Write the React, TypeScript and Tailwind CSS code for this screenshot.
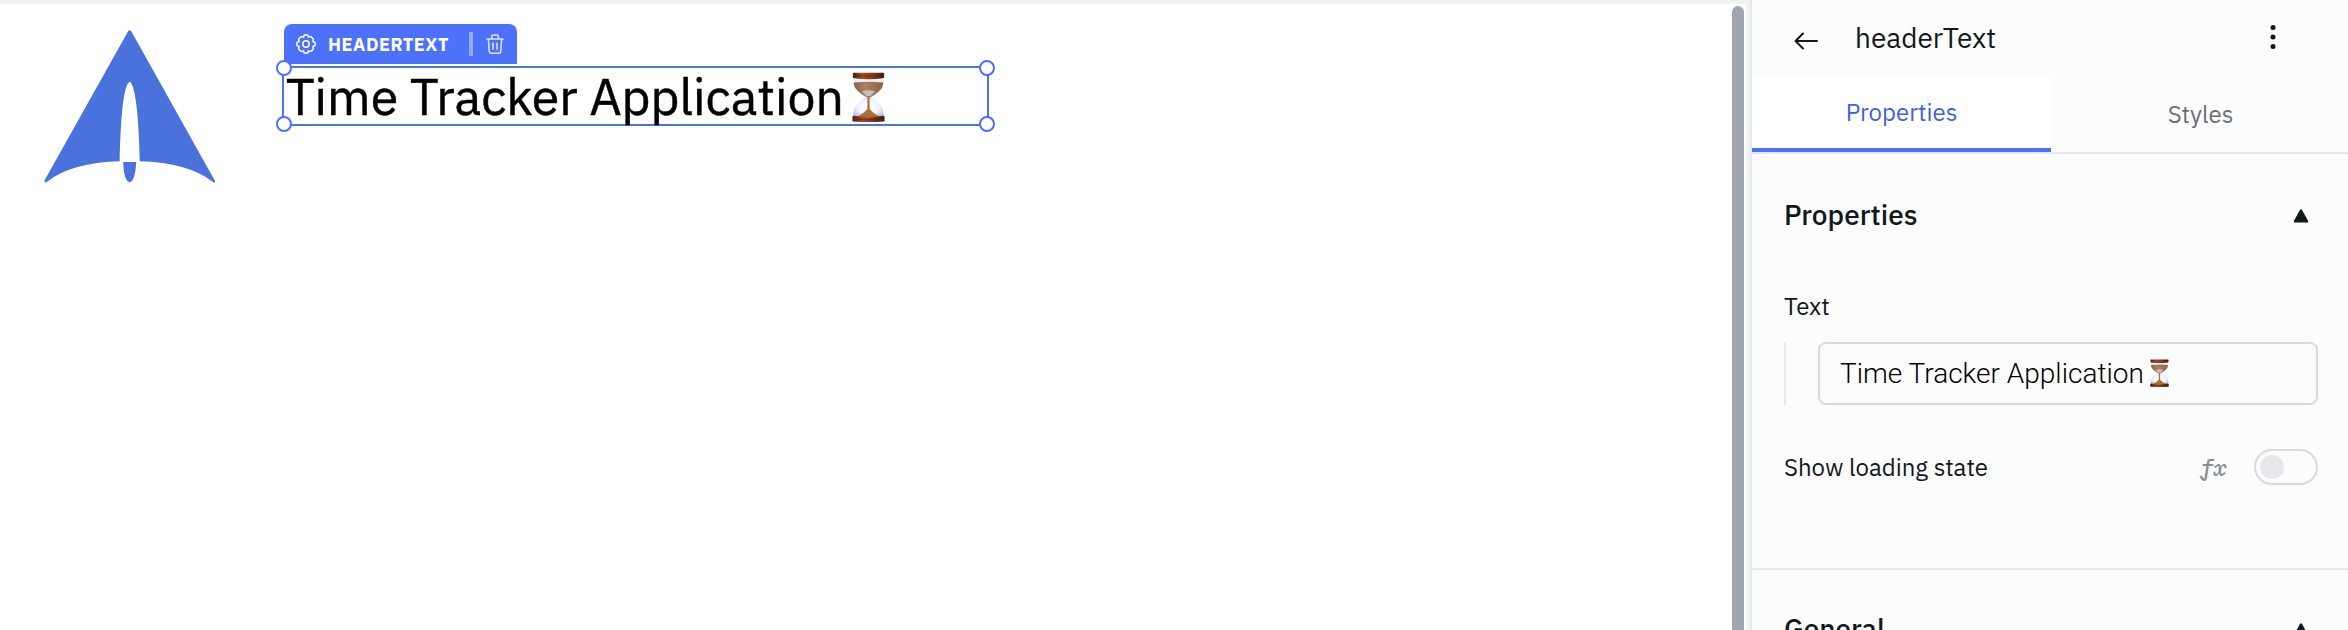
import React from "react";

function Hourglass({ className }: { className: string }) {
  return (
    <svg viewBox="0 0 33 50" className={className} role="img" aria-label="hourglass" preserveAspectRatio="none">
      <defs>
        <linearGradient id="wood" x1="0" x2="1" y1="0" y2="0">
          <stop offset="0" stopColor="#4a1c0a" />
          <stop offset="0.3" stopColor="#a04a26" />
          <stop offset="0.6" stopColor="#873a18" />
          <stop offset="1" stopColor="#43180a" />
        </linearGradient>
        <linearGradient id="sand" x1="0" x2="1" y1="0" y2="0">
          <stop offset="0" stopColor="#8a6348" />
          <stop offset="0.4" stopColor="#ab8262" />
          <stop offset="1" stopColor="#8a6145" />
        </linearGradient>
        <radialGradient id="glass" cx="0.5" cy="0.5" r="0.6">
          <stop offset="0" stopColor="#ffffff" />
          <stop offset="0.6" stopColor="#f1f4fd" />
          <stop offset="1" stopColor="#b4c0e4" />
        </radialGradient>
      </defs>
      <path d="M1.500 5H31.500C32.500 15 28 20 18 25.500H15C5 20 .5 15 1.500 5Z" fill="#e9f1f5" />
      <path d="M15 25.500H18C28 30 32.500 36 31.500 45H1.500C.5 36 5 30 15 25.500Z" fill="url(#glass)" />
      <path d="M1.700 10.500Q16.500 9 31.300 10.500C31 17 26.500 20.500 18 25.500H15C6.500 20.500 2 17 1.700 10.500Z" fill="url(#sand)" />
      <path d="M10 19.500Q16.500 17 23 19.500L18.500 24H14.500Z" fill="#c6c0bc" />
      <path d="M15.500 25H17.500L17.700 37Q21 41.500 29 45H4Q12 41.500 15.300 37Z" fill="#a97138" />
      <path d="M1.500 .8H31.500Q33 1.500 32 3Q33 5.500 31 6.200Q16.500 8.200 2 6.200Q0 5.500 1 3Q0 1.500 1.500 .8Z" fill="url(#wood)" />
      <path d="M1.500 43.800Q16.500 46.500 31.500 43.800Q33.500 45 32.300 47Q33.500 49 31.500 49.500Q16.500 50.500 1.500 49.500Q-.5 49 .7 47Q-.5 45 1.500 43.800Z" fill="url(#wood)" />
      <path d="M1.500 3.400Q16.500 5 31.500 3.400M1.200 47Q16.500 48.600 31.800 47" stroke="#4a1c0a" strokeOpacity="0.55" strokeWidth="0.800" fill="none" />
    </svg>
  );
}

function Logo() {
  return (
    <svg viewBox="0 0 172 154" className="h-[154px] w-[172px]">
      <path
        d="M84.400 .8Q85.700 -.5 87 .8L171 151Q171.500 153.500 169 152Q144 132.500 95.800 131.300C95 98 92.500 55 85.700 51.800C78.500 55 76.500 98 75.700 131.300Q28 132.500 3 151.700Q0 153.500 .5 150.500Z"
        fill="#4a72dd"
      />
      <path d="M79.200 132H92.200C91.500 145 89 152.200 85.700 152.200C82.200 152.200 79.500 145 79.200 132Z" fill="#4a72dd" />
    </svg>
  );
}

function GearIcon() {
  return (
    <svg viewBox="0 0 20 20" className="size-5" fill="none" stroke="white" strokeWidth="1.500" strokeLinejoin="round">
      <path d="M8.200 1.200Q10 .4 11.800 1.200L12.400 3.100L14.600 2.600Q16.600 3.400 17.400 5.400L16.900 7.600L18.800 8.200Q19.600 10 18.800 11.800L16.900 12.400L17.400 14.600Q16.600 16.600 14.600 17.400L12.400 16.900L11.800 18.800Q10 19.600 8.200 18.800L7.600 16.900L5.400 17.400Q3.400 16.600 2.600 14.600L3.100 12.400L1.200 11.800Q.4 10 1.200 8.200L3.100 7.600L2.600 5.400Q3.400 3.400 5.400 2.600L7.600 3.100Z" />
      <circle cx="10" cy="10" r="3.200" />
    </svg>
  );
}

function TrashIcon() {
  return (
    <svg viewBox="0 0 18 20" className="h-5 w-[18px]" fill="none" stroke="#dfe6ff" strokeWidth="1.500">
      <path d="M.4 5H17.600M5.700 5V2.200Q5.700 .9 7 .9H11Q12.300 .9 12.300 2.200V5M2.300 5L3.300 17.600Q3.500 19.200 5 19.200H13Q14.500 19.200 14.700 17.600L15.700 5M7 8.500V15.800M11 8.500V15.800" />
    </svg>
  );
}

function Triangle() {
  return (
    <svg viewBox="0 0 16 14" className="mt-0.5 h-3.5 w-4 shrink-0">
      <path d="M8 1.600L14 12.400H2Z" fill="#11181c" stroke="#11181c" strokeWidth="2.400" strokeLinejoin="round" />
    </svg>
  );
}

const handle = "absolute size-4 rounded-full border-2 border-[#4d72fa] bg-white";

function Canvas() {
  return (
    <main className="flex h-full w-[1732px] shrink-0 items-start border-t-4 border-[#f1f2f4] bg-white">
      <div className="pl-11 pt-[26px]">
        <Logo />
      </div>
      <div className="ml-[66px] pt-5">
        <div className="ml-0.5 flex h-10 w-[233px] items-center rounded-t-lg bg-[#4d72fa] pl-3">
          <GearIcon />
          <span className="ml-3 w-[129px] whitespace-nowrap text-[18px] font-bold tracking-[0.55px] text-white">HEADERTEXT</span>
          <span className="ml-3 h-6 w-1 bg-[#94aafc]" />
          <span className="ml-[13px]">
            <TrashIcon />
          </span>
        </div>
        <div className="relative mt-0.5 flex h-[60px] w-[707px] items-center border-2 border-[#4d72fa] pl-0.5">
          <h1 className="whitespace-nowrap pt-0.5 text-[50px] leading-none text-black [-webkit-text-stroke:0.5px_black]">Time Tracker Application</h1>
          <Hourglass className="ml-2 mt-px h-[50px] w-[33px]" />
          <i className={`${handle} -left-2 -top-2`} />
          <i className={`${handle} -right-2 -top-2`} />
          <i className={`${handle} -bottom-2 -left-2`} />
          <i className={`${handle} -bottom-2 -right-2`} />
        </div>
      </div>
    </main>
  );
}

function Inspector() {
  return (
    <aside className="flex h-full min-w-0 flex-1 flex-col bg-[#fcfcfc] text-[#11181c]">
      <header className="flex h-[76px] shrink-0 items-center pl-[42px] pr-[72px]">
        <svg viewBox="0 0 24 18" className="mt-1.5 h-[18px] w-6" fill="none" stroke="#11181c" strokeWidth="2" strokeLinecap="round" strokeLinejoin="round">
          <path d="M23 9H1.500M9 1.500L1.500 9L9 16.500" />
        </svg>
        <span className="ml-[37px] flex-1 whitespace-nowrap text-[28px] leading-8">headerText</span>
        <svg viewBox="0 0 6 24" className="mb-0.5 h-6 w-1.5" fill="#11181c">
          <circle cx="3" cy="2.600" r="2.500" />
          <circle cx="3" cy="12" r="2.500" />
          <circle cx="3" cy="21.500" r="2.500" />
        </svg>
      </header>
      <nav className="flex h-[78px] shrink-0 border-b-2 border-[#e4e7eb] text-2xl">
        <div className="flex w-[299px] items-center justify-center border-b-4 border-[#4d72fa] bg-white text-[#3e63dd]">Properties</div>
        <div className="flex flex-1 items-center justify-center pl-0.5 text-[#687076]">Styles</div>
      </nav>
      <section className="h-[416px] shrink-0 border-b-2 border-[#e6e8eb] pl-8 pr-[30px]">
        <div className="flex h-[122px] items-center justify-between pr-[9px]">
          <h2 className="text-[28px] font-medium">Properties</h2>
          <Triangle />
        </div>
        <div className="flex h-[66px] items-center pb-1.5">
          <span className="whitespace-nowrap text-2xl">Text</span>
        </div>
        <div className="flex h-[63px] border-l-2 border-[#e6e8eb] pl-8">
          <div className="flex flex-1 items-center rounded-lg border-2 border-[#d7dbdf] pl-5">
            <span className="whitespace-nowrap font-[Roboto] text-[28px] font-light text-black">Time Tracker Application</span>
            <Hourglass className="mb-0.5 ml-1.5 h-7 w-[19px]" />
          </div>
        </div>
        <div className="mt-11 flex h-9 items-center">
          <span className="flex-1 whitespace-nowrap text-2xl">Show loading state</span>
          <span className="mr-[27px] w-[27px] whitespace-nowrap font-['IBM_Plex_Mono','DejaVu_Serif',serif] text-[22px] font-medium italic text-[#889096]">fx</span>
          <span className="flex h-9 w-16 items-center rounded-full border-2 border-[#d7dbdf] pl-1">
            <span className="size-6 rounded-full bg-[#e6e8eb]" />
          </span>
        </div>
      </section>
      <section className="flex h-[118px] shrink-0 items-center justify-between pl-8 pr-[39px]">
        <h2 className="text-[28px] font-medium">General</h2>
        <Triangle />
      </section>
    </aside>
  );
}

export default function App() {
  return (
    <div className="flex h-[630px] w-[2348px] overflow-hidden bg-white font-['IBM_Plex_Sans',Roboto,sans-serif]">
      <Canvas />
      <div className="flex h-full w-5 shrink-0 border-r-2 border-[#e6e8eb] bg-[#f1f2f4] pt-1">
        <div className="flex h-full w-3.5 bg-white pt-0.5">
          <div className="h-full w-3 rounded-t-full bg-[#9fa6ad]" />
        </div>
      </div>
      <Inspector />
    </div>
  );
}
